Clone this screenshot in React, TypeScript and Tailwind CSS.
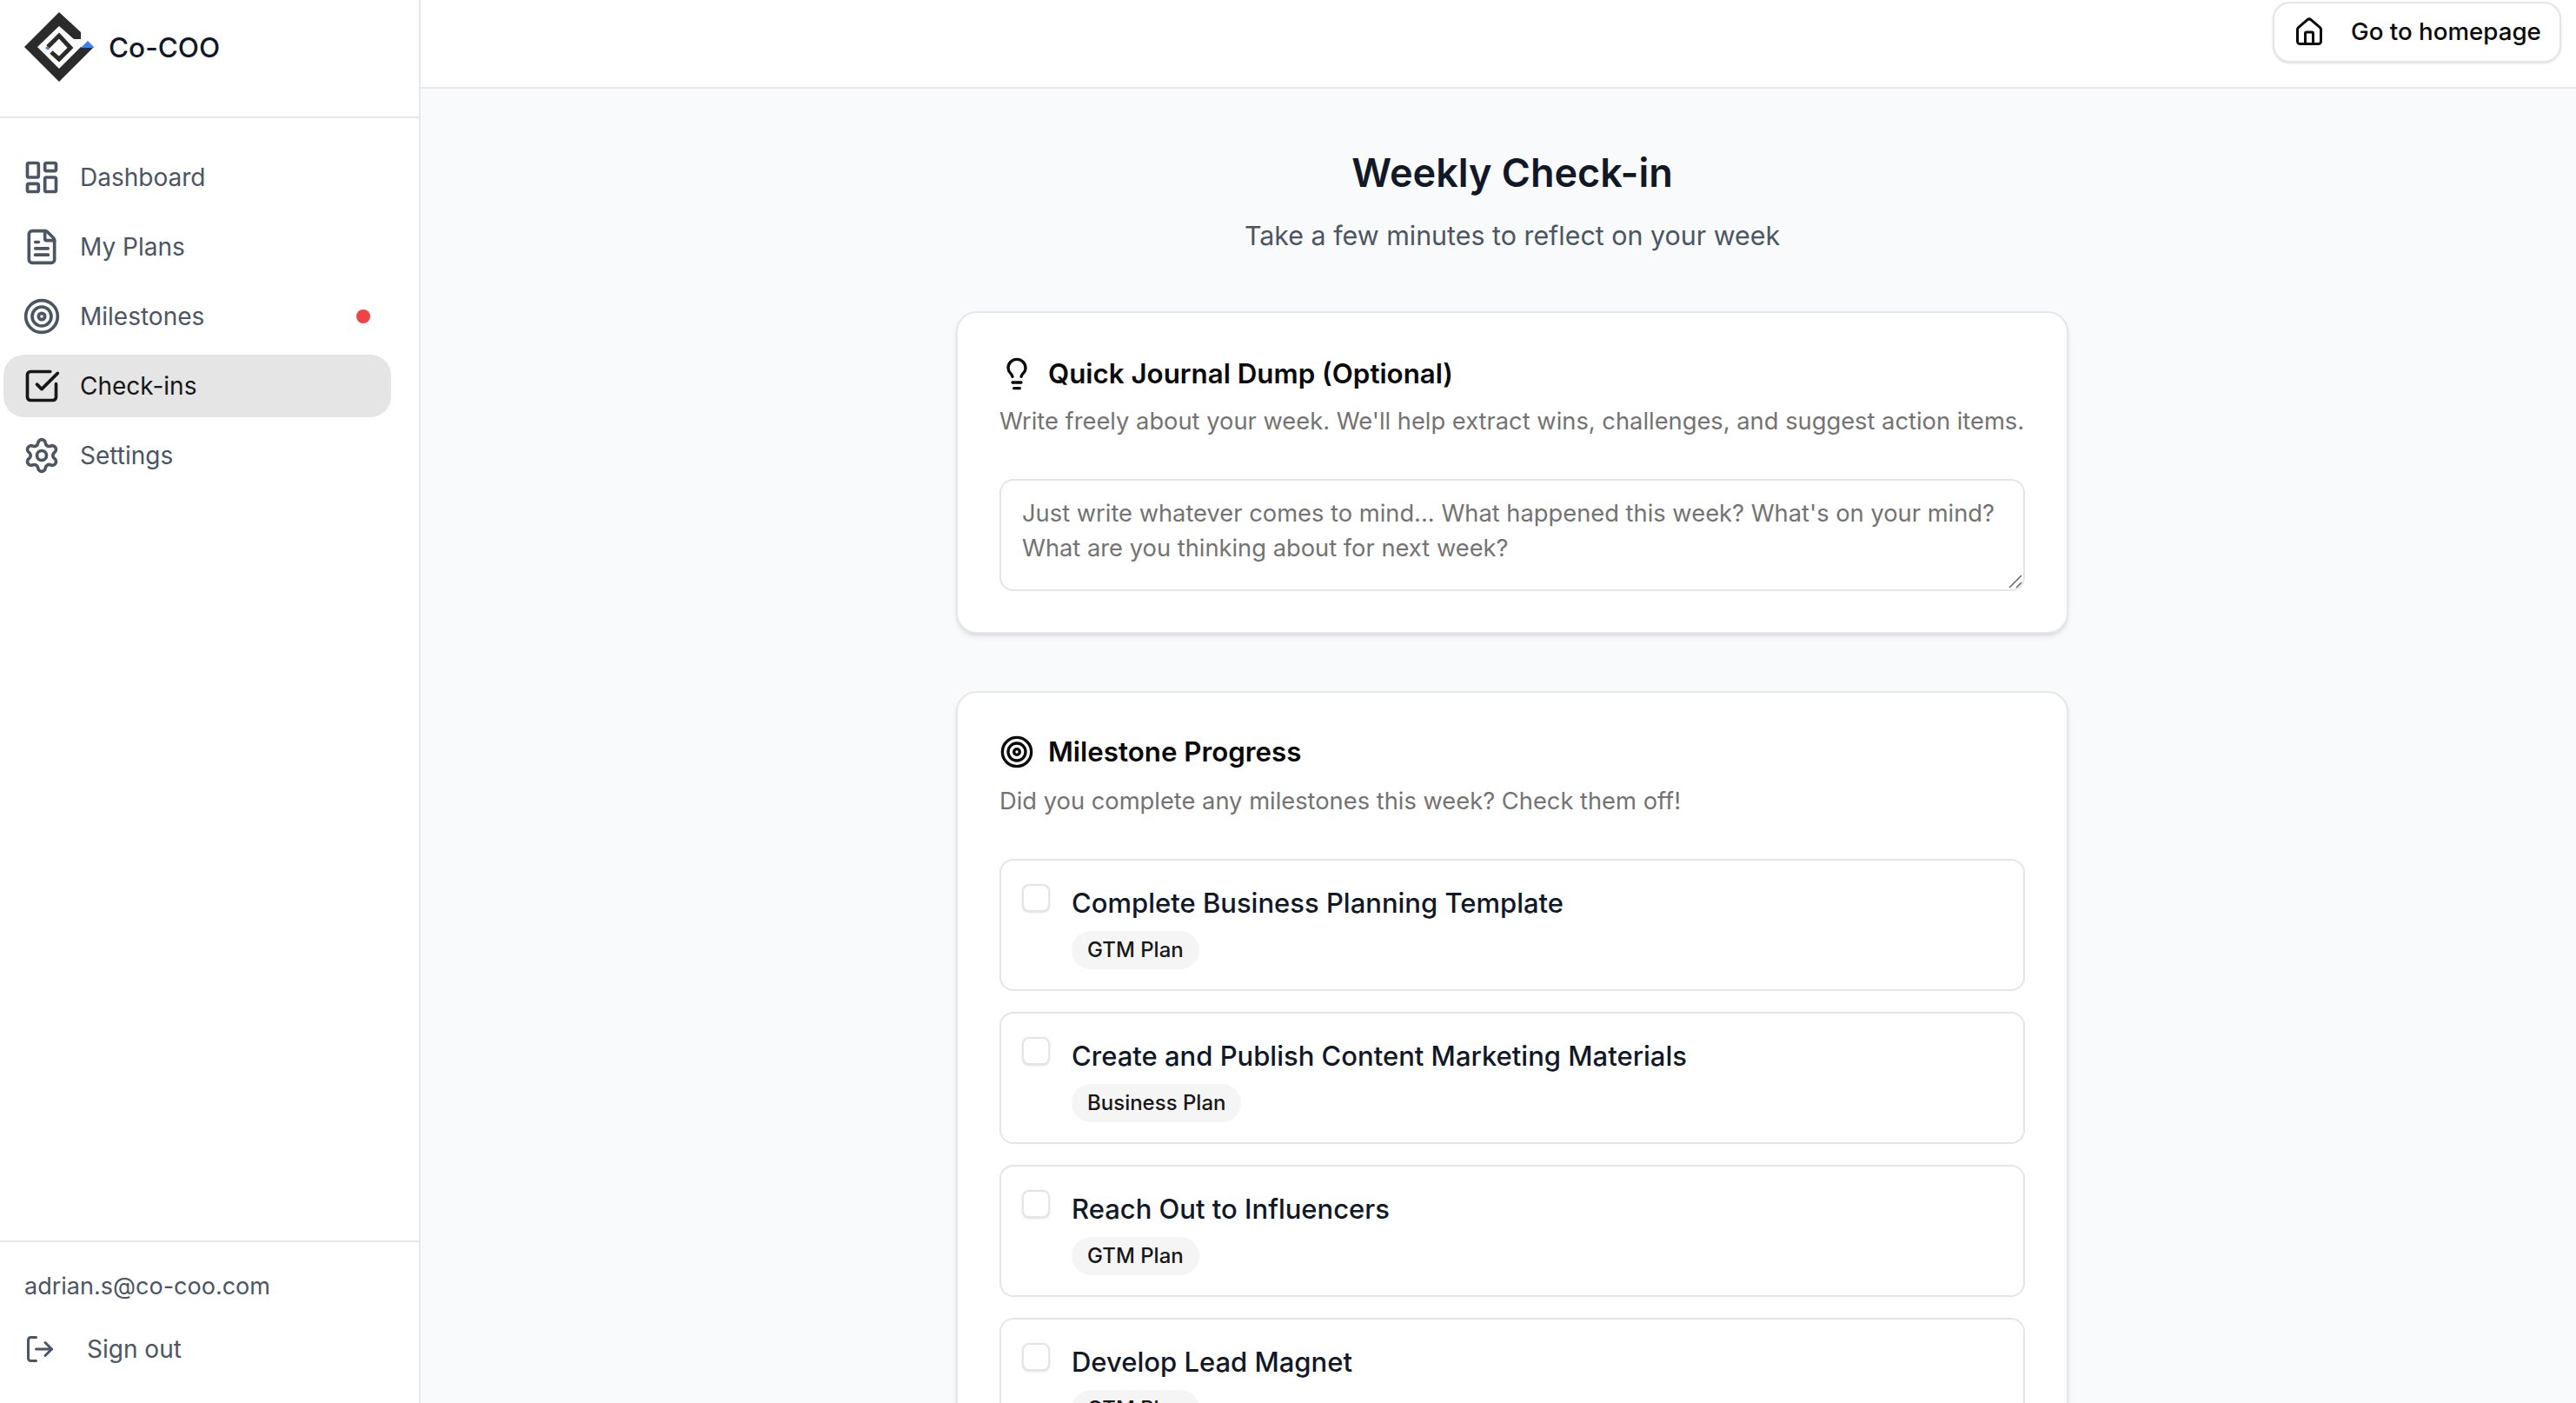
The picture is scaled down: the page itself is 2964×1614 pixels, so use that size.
import {
  LayoutDashboard,
  FileText,
  Target,
  SquareCheckBig,
  Settings,
  LogOut,
  House,
  Lightbulb,
  LucideIcon,
} from 'lucide-react';

interface NavItem {
  icon: LucideIcon;
  label: string;
  active?: boolean;
  dot?: boolean;
}

const navItems: NavItem[] = [
  { icon: LayoutDashboard, label: 'Dashboard' },
  { icon: FileText, label: 'My Plans' },
  { icon: Target, label: 'Milestones', dot: true },
  { icon: SquareCheckBig, label: 'Check-ins', active: true },
  { icon: Settings, label: 'Settings' },
];

const milestones = [
  { title: 'Complete Business Planning Template', plan: 'GTM Plan' },
  { title: 'Create and Publish Content Marketing Materials', plan: 'Business Plan' },
  { title: 'Reach Out to Influencers', plan: 'GTM Plan' },
  { title: 'Develop Lead Magnet', plan: 'GTM Plan' },
];

const Logo = () => (
  <svg width="80" height="80" viewBox="28 14 80 80" className="shrink-0">
    <polygon
      points="28,54 68,14 93,37 93,45 85,45 68,30 43,54 68,79 93,54 108,54 68,94"
      fill="#2b2b2b"
    />
    <polygon points="93,55 101,47 109,55" fill="#3b82f6" />
    <polyline
      points="55,54 68,41 81,55 68,68 59,60"
      fill="none"
      stroke="#2b2b2b"
      strokeWidth="5"
    />
    <polygon points="52,55 55,53 57,57 54,57" fill="#3b82f6" />
  </svg>
);

const App = () => {
  return (
    <div className="flex h-screen overflow-hidden bg-[#f9fafb] font-['Inter',sans-serif]">
      <aside className="flex w-[484px] shrink-0 flex-col border-r-2 border-[#e5e7eb] bg-white">
        <div className="flex h-[136px] items-start gap-[17px] border-b-2 border-[#e5e7eb] pl-[28px] pt-[14px]">
          <Logo />
          <span className="mt-[19px] text-[31.5px] leading-[44px] font-medium text-[#111827]">Co-COO</span>
        </div>

        <nav className="flex flex-1 flex-col gap-[8px] pl-[4px] pr-[32px] pt-[32px]">
          {navItems.map((item) => {
            const Icon = item.icon;
            return (
              <div
                key={item.label}
                className={`flex h-[72px] items-center gap-[22px] rounded-[24px] pl-[22px] pr-[24px] text-[28px] font-normal ${
                  item.active ? 'bg-[#e5e5e5] text-[#171717]' : 'text-[#4b5563]'
                }`}
              >
                <Icon size={44} className="shrink-0" />
                <span className="flex-1">{item.label}</span>
                {item.dot && <span className="h-[16px] w-[16px] rounded-full bg-[#ef4444]" />}
              </div>
            );
          })}
        </nav>

        <div className="h-[187px] border-t-2 border-[#e5e7eb] pl-[28px] pt-[31px]">
          <p className="text-[27px] leading-[40px] text-[#4b5563]">adrian.s@co-coo.com</p>
          <div className="mt-[32px] flex items-center gap-[36px] text-[28px] leading-[40px] font-normal text-[#4b5563]">
            <LogOut size={36} className="shrink-0" />
            <span>Sign out</span>
          </div>
        </div>
      </aside>

      <div className="flex min-w-0 flex-1 flex-col">
        <header className="flex h-[102px] shrink-0 items-start justify-end border-b-2 border-[#e5e7eb] bg-white pr-[17px] pt-[2px]">
          <button className="flex h-[70px] w-[332px] items-center gap-[30px] rounded-[20px] border-2 border-[#e5e5e5] bg-white pl-[22px] text-[27.7px] font-medium text-[#0a0a0a] shadow-sm">
            <House size={36} className="shrink-0" />
            Go to homepage
          </button>
        </header>

        <main className="min-h-0 flex-1 overflow-hidden pl-[32px] pt-[65px]">
          <div className="mx-auto w-[1280px]">
            <h1 className="text-center text-[45px] leading-[64px] font-semibold text-[#111827]">Weekly Check-in</h1>
            <p className="mt-[16px] text-center text-[30.4px] leading-[48px] text-[#4b5563]">
              Take a few minutes to reflect on your week
            </p>

            <section className="mt-[63px] rounded-[24px] border-2 border-[#e5e7eb] bg-white px-[48px] pb-[47px] pt-[46px] shadow-md">
              <h2 className="flex items-center gap-[16px] text-[31.3px] leading-[48px] font-semibold text-[#0a0a0a]">
                <Lightbulb size={40} className="shrink-0" />
                Quick Journal Dump (Optional)
              </h2>
              <p className="mt-[11px] text-[27.3px] leading-[40px] text-[#737373]">
                Write freely about your week. We'll help extract wins, challenges, and suggest action items.
              </p>
              <div className="relative mt-[46px]">
                <textarea
                  rows={2}
                  className="block h-[129px] w-full resize-none rounded-[16px] border-2 border-[#e5e5e5] bg-white px-[24px] py-[18px] text-[27.3px] leading-[40px] text-[#0a0a0a] placeholder:text-[#737373]"
                  placeholder="Just write whatever comes to mind... What happened this week? What's on your mind? What are you thinking about for next week?"
                />
                <svg width="16" height="16" viewBox="0 0 16 16" className="absolute bottom-[3px] right-[3px]">
                  <path d="M15 1 1 15M15 9 9 15" stroke="#666" strokeWidth="1.5" fill="none" />
                </svg>
              </div>
            </section>

            <section className="mt-[66px] rounded-[24px] border-2 border-[#e5e7eb] bg-white px-[48px] pb-[48px] pt-[44px] shadow-md">
              <h2 className="flex items-center gap-[16px] text-[31.3px] leading-[48px] font-semibold text-[#0a0a0a]">
                <Target size={40} className="shrink-0" />
                Milestone Progress
              </h2>
              <p className="mt-[13px] text-[27.3px] leading-[40px] text-[#737373]">
                Did you complete any milestones this week? Check them off!
              </p>
              <div className="mt-[46px] flex flex-col gap-[24px]">
                {milestones.map((m) => (
                  <div
                    key={m.title}
                    className="flex h-[152px] gap-[25px] rounded-[16px] border-2 border-[#e5e5e5] pl-[24px] pt-[25px]"
                  >
                    <span className="mt-[2px] h-[32px] w-[32px] shrink-0 rounded-[8px] border-2 border-[#e5e5e5] bg-white shadow-sm" />
                    <div>
                      <p className="text-[31px] leading-[48px] font-medium text-[#111827]">{m.title}</p>
                      <span className="mt-[8px] inline-flex h-[44px] items-center rounded-full bg-[#f5f5f5] px-[18px] text-[24px] font-medium text-[#171717]">
                        {m.plan}
                      </span>
                    </div>
                  </div>
                ))}
              </div>
            </section>
          </div>
        </main>
      </div>
    </div>
  );
};

export default App;
